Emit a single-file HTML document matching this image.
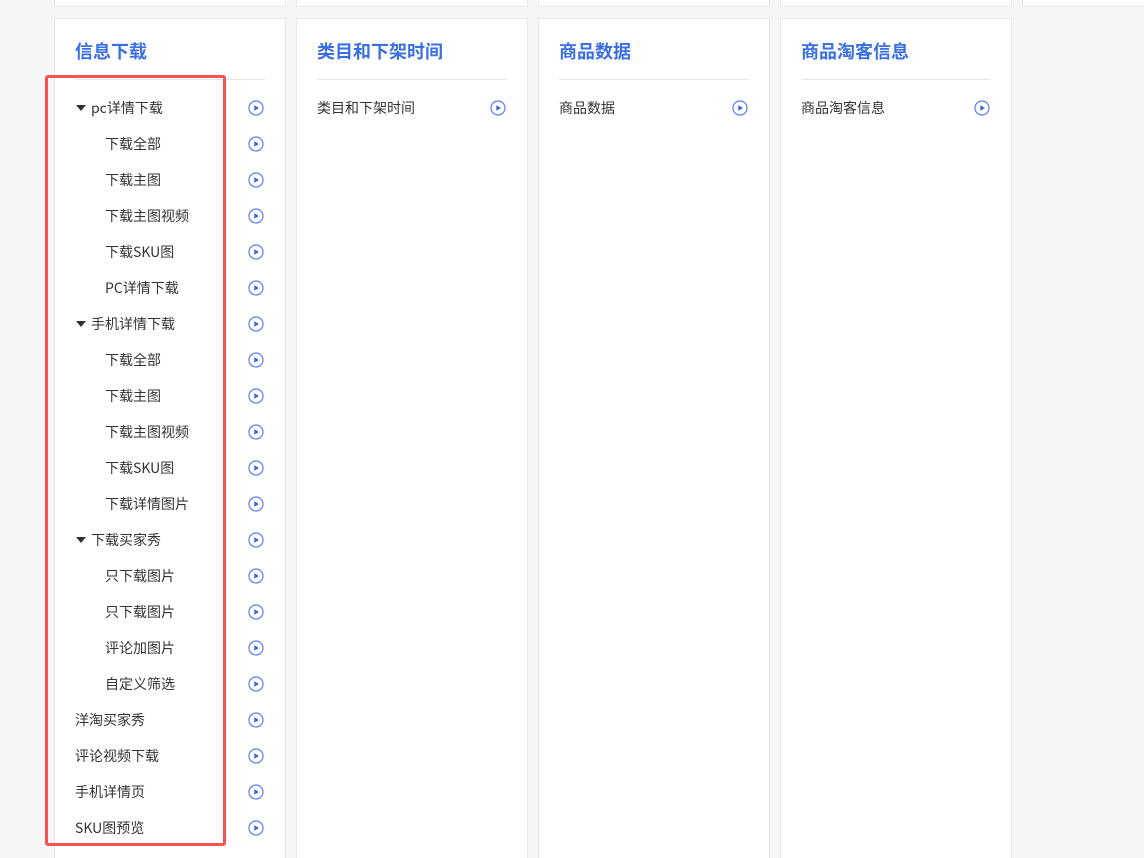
<!DOCTYPE html>
<html><head><meta charset="utf-8"><style>
*{margin:0;padding:0;box-sizing:border-box}
html,body{width:1144px;height:858px;overflow:hidden}
body{background:#f5f6f8;position:relative;font-family:"Liberation Sans","Noto Sans CJK SC",sans-serif;color:#333}
.top{position:absolute;top:-10px;height:17px;background:#fff;border:1px solid #e6e8eb}
.card{position:absolute;top:18px;width:232px;height:845px;background:#fff;border:1px solid #e6e8eb}
.card h2{position:absolute;left:20px;top:19px;font-size:18px;font-weight:bold;color:#3a6fe3;font-family:"Noto Sans CJK SC",sans-serif}
.card .hr{position:absolute;left:20px;right:20px;top:60px;height:1px;background:#e8e8e8}
.row{position:absolute;left:20px;right:20px;height:36px;line-height:36px;font-size:14px;font-family:"Noto Sans CJK SC",sans-serif}
.row.c{padding-left:30px}
.row.p{padding-left:16px}
.row.p:before{content:"";position:absolute;left:1px;top:15px;border-left:5px solid transparent;border-right:5px solid transparent;border-top:6px solid #333}
.row svg{position:absolute;right:1px;top:10px}
.red{position:absolute;left:45px;top:75px;width:181px;height:771px;border:3px solid #f55353;border-radius:3px}
</style></head><body>
<div class="top" style="left:54px;width:232px"></div>
<div class="top" style="left:296px;width:232px"></div>
<div class="top" style="left:538px;width:232px"></div>
<div class="top" style="left:780px;width:232px"></div>
<div class="top" style="left:1022px;width:140px"></div>

<svg width="0" height="0" style="position:absolute"><defs><g id="ic"><circle cx="8" cy="8" r="7" fill="none" stroke="#5a7ef0" stroke-width="1.2"/><path d="M6.3 5.2 L11 8 L6.3 10.8Z" fill="#3a62e0"/></g></defs></svg>

<div class="card" style="left:54px">
<h2>信息下载</h2><div class="hr"></div>
<div class="row p" style="top:71px">pc详情下载<svg width="16" height="16"><use href="#ic"/></svg></div>
<div class="row c" style="top:107px">下载全部<svg width="16" height="16"><use href="#ic"/></svg></div>
<div class="row c" style="top:143px">下载主图<svg width="16" height="16"><use href="#ic"/></svg></div>
<div class="row c" style="top:179px">下载主图视频<svg width="16" height="16"><use href="#ic"/></svg></div>
<div class="row c" style="top:215px">下载SKU图<svg width="16" height="16"><use href="#ic"/></svg></div>
<div class="row c" style="top:251px">PC详情下载<svg width="16" height="16"><use href="#ic"/></svg></div>
<div class="row p" style="top:287px">手机详情下载<svg width="16" height="16"><use href="#ic"/></svg></div>
<div class="row c" style="top:323px">下载全部<svg width="16" height="16"><use href="#ic"/></svg></div>
<div class="row c" style="top:359px">下载主图<svg width="16" height="16"><use href="#ic"/></svg></div>
<div class="row c" style="top:395px">下载主图视频<svg width="16" height="16"><use href="#ic"/></svg></div>
<div class="row c" style="top:431px">下载SKU图<svg width="16" height="16"><use href="#ic"/></svg></div>
<div class="row c" style="top:467px">下载详情图片<svg width="16" height="16"><use href="#ic"/></svg></div>
<div class="row p" style="top:503px">下载买家秀<svg width="16" height="16"><use href="#ic"/></svg></div>
<div class="row c" style="top:539px">只下载图片<svg width="16" height="16"><use href="#ic"/></svg></div>
<div class="row c" style="top:575px">只下载图片<svg width="16" height="16"><use href="#ic"/></svg></div>
<div class="row c" style="top:611px">评论加图片<svg width="16" height="16"><use href="#ic"/></svg></div>
<div class="row c" style="top:647px">自定义筛选<svg width="16" height="16"><use href="#ic"/></svg></div>
<div class="row" style="top:683px">洋淘买家秀<svg width="16" height="16"><use href="#ic"/></svg></div>
<div class="row" style="top:719px">评论视频下载<svg width="16" height="16"><use href="#ic"/></svg></div>
<div class="row" style="top:755px">手机详情页<svg width="16" height="16"><use href="#ic"/></svg></div>
<div class="row" style="top:791px">SKU图预览<svg width="16" height="16"><use href="#ic"/></svg></div>
</div>
<div class="card" style="left:296px"><h2>类目和下架时间</h2><div class="hr"></div>
<div class="row" style="top:71px">类目和下架时间<svg width="16" height="16"><use href="#ic"/></svg></div></div>
<div class="card" style="left:538px"><h2>商品数据</h2><div class="hr"></div>
<div class="row" style="top:71px">商品数据<svg width="16" height="16"><use href="#ic"/></svg></div></div>
<div class="card" style="left:780px"><h2>商品淘客信息</h2><div class="hr"></div>
<div class="row" style="top:71px">商品淘客信息<svg width="16" height="16"><use href="#ic"/></svg></div></div>
<div class="red"></div>
</body></html>
